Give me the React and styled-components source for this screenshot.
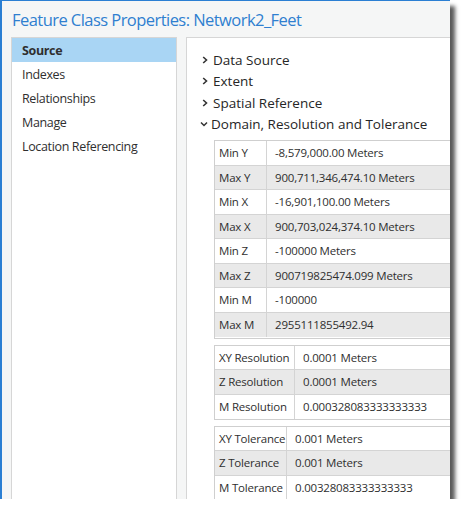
import React from "react";
import styled, { createGlobalStyle } from "styled-components";

const GlobalStyle = createGlobalStyle`
  html, body {
    margin: 0;
    padding: 0;
    background: #ffffff;
  }
  body {
    font-family: "Open Sans", "Liberation Sans", sans-serif;
    color: #2b2b2b;
  }
`;

const Window = styled.div`
  width: 448px;
  height: 498px;
  border-top: 1px solid #2b7fd3;
  border-left: 2px solid #2b7fd3;
  background: #f5f6f6;
  box-shadow: 5px 6px 4px rgba(0, 0, 0, 0.65);
  overflow: hidden;
  display: flex;
  flex-direction: column;
`;

const Title = styled.div`
  height: 36px;
  padding-left: 10px;
  display: flex;
  align-items: center;
  font-size: 16.5px;
  color: #2f7fd0;
  letter-spacing: -0.55px;
`;

const Body = styled.div`
  flex: 1;
  display: flex;
  padding-left: 9px;
  gap: 9px;
  min-height: 0;
`;

const Sidebar = styled.div`
  width: 164px;
  flex-shrink: 0;
  background: #fff;
  border: 1px solid #d6d6d6;
  border-bottom: none;
`;

const NavItem = styled.div`
  height: 24px;
  padding-left: 10px;
  display: flex;
  align-items: center;
  font-size: 12.5px;
  letter-spacing: -0.35px;
  color: #2f2f2f;
  font-weight: ${(p) => (p.$active ? 700 : 400)};
  background: ${(p) => (p.$active ? "#a9d5f4" : "transparent")};
`;

const Panel = styled.div`
  flex: 1;
  background: #fff;
  border: 1px solid #d6d6d6;
  border-right: none;
  border-bottom: none;
  padding: 11px 0 0 15px;
  min-width: 0;
`;

const Expander = styled.div`
  height: 21.5px;
  display: flex;
  align-items: center;
  gap: ${(p) => (p.$open ? 3 : 5)}px;
  margin-left: ${(p) => (p.$open ? -2 : 0)}px;
  font-size: 13.5px;
  color: #262626;
`;

const Chevron = styled.svg`
  width: ${(p) => p.$w || 6}px;
  height: 8px;
  flex-shrink: 0;
`;

const Groups = styled.div`
  margin: 5px 0 0 12px;
  display: flex;
  flex-direction: column;
  gap: 5.5px;
`;

const Group = styled.div`
  width: 300px;
  border: 1px solid #cfcfcf;
  border-right: none;
  padding-bottom: ${(p) => p.$pad || 0}px;
  background: #fff;
`;

const Row = styled.div`
  display: grid;
  grid-template-columns: ${(p) => p.$label}px 1fr;
  height: 24.5px;
  box-sizing: border-box;
  border-bottom: 1px solid #d4d4d4;
  background: ${(p) => (p.$shade ? "#e9e9e9" : "#fff")};
  font-size: 11.5px;
  letter-spacing: -0.2px;
  color: #2f2f2f;
  &:last-child {
    border-bottom: none;
  }
`;

const Cell = styled.div`
  display: flex;
  align-items: center;
  padding-left: 4px;
  white-space: nowrap;
  & + & {
    border-left: 1px solid #d4d4d4;
    padding-left: 8px;
  }
`;

const ChevronRight = () => (
  <Chevron viewBox="0 0 6 8">
    <path d="M1.2 1 L4.5 4 L1.2 7" fill="none" stroke="#333" strokeWidth="1.6" />
  </Chevron>
);

const ChevronDown = () => (
  <Chevron viewBox="0 0 8 8" $w={8}>
    <path d="M1 2.5 L4 5.5 L7 2.5" fill="none" stroke="#333" strokeWidth="1.5" />
  </Chevron>
);

const nav = ["Source", "Indexes", "Relationships", "Manage", "Location Referencing"];

const domain = [
  ["Min Y", "-8,579,000.00 Meters"],
  ["Max Y", "900,711,346,474.10 Meters"],
  ["Min X", "-16,901,100.00 Meters"],
  ["Max X", "900,703,024,374.10 Meters"],
  ["Min Z", "-100000 Meters"],
  ["Max Z", "900719825474.099 Meters"],
  ["Min M", "-100000"],
  ["Max M", "2955111855492.94"],
];

const resolution = [
  ["XY Resolution", "0.0001 Meters"],
  ["Z Resolution", "0.0001 Meters"],
  ["M Resolution", "0.000328083333333333"],
];

const tolerance = [
  ["XY Tolerance", "0.001 Meters"],
  ["Z Tolerance", "0.001 Meters"],
  ["M Tolerance", "0.00328083333333333"],
];

const Table = ({ rows, label, pad }) => (
  <Group $pad={pad}>
    {rows.map(([k, v], i) => (
      <Row key={k} $label={label} $shade={i % 2 === 1}>
        <Cell>{k}</Cell>
        <Cell>{v}</Cell>
      </Row>
    ))}
  </Group>
);

export default function App() {
  return (
    <>
      <GlobalStyle />
      <Window>
        <Title>Feature Class Properties: Network2_Feet</Title>
        <Body>
          <Sidebar>
            {nav.map((n, i) => (
              <NavItem key={n} $active={i === 0}>
                {n}
              </NavItem>
            ))}
          </Sidebar>
          <Panel>
            <Expander>
              <ChevronRight />
              Data Source
            </Expander>
            <Expander>
              <ChevronRight />
              Extent
            </Expander>
            <Expander>
              <ChevronRight />
              Spatial Reference
            </Expander>
            <Expander $open>
              <ChevronDown />
              Domain, Resolution and Tolerance
            </Expander>
            <Groups>
              <Table rows={domain} label={51} pad={1} />
              <Table rows={resolution} label={79} />
              <Table rows={tolerance} label={71} />
            </Groups>
          </Panel>
        </Body>
      </Window>
    </>
  );
}
